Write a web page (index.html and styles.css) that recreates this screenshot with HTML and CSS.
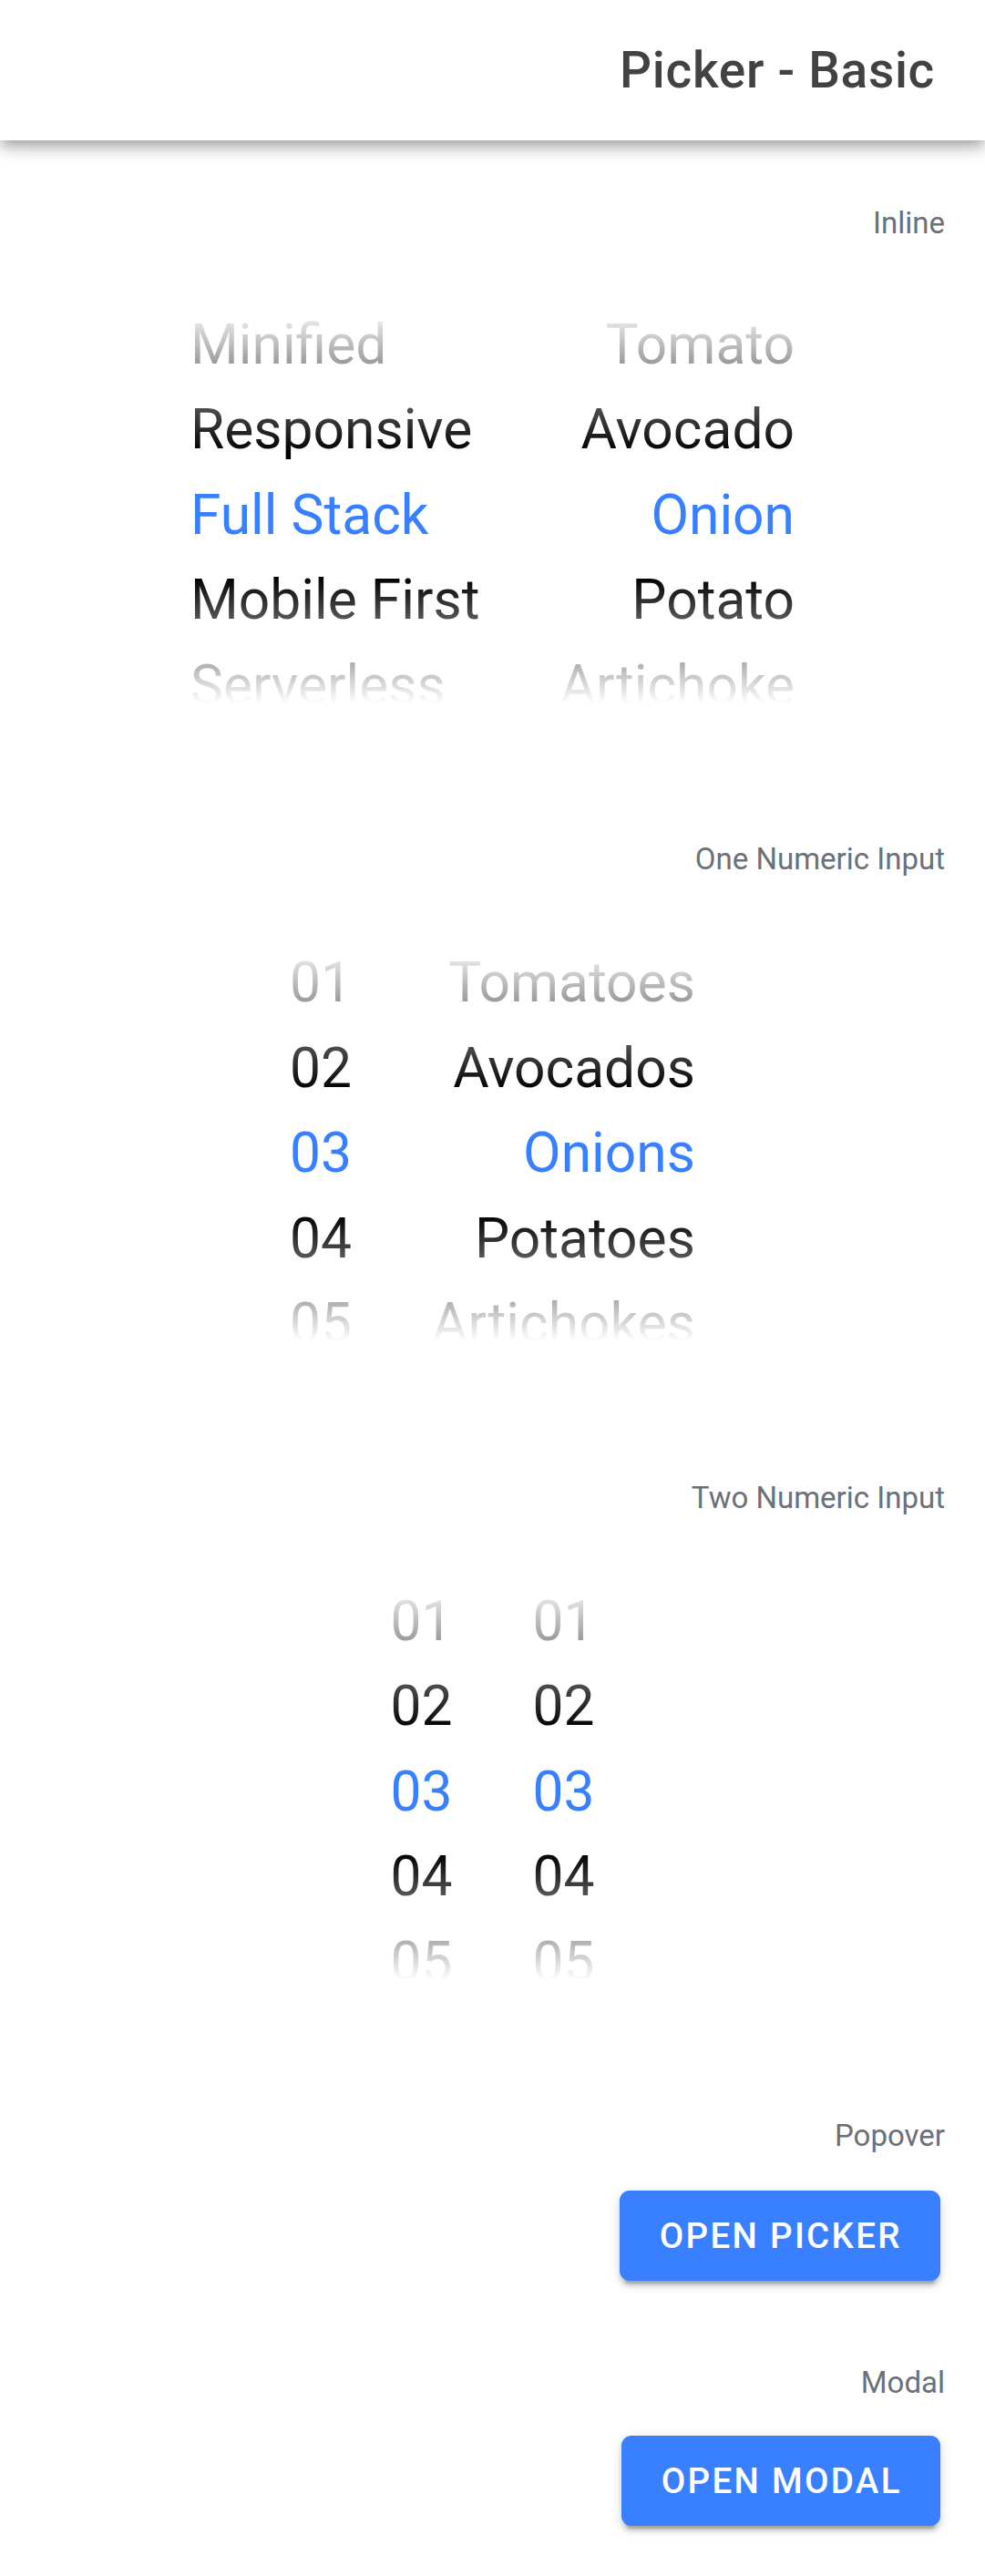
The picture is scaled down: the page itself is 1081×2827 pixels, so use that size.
FILE: index.html
```html
<!DOCTYPE html>
<html lang="en">
<head>
<meta charset="utf-8">
<title>Picker - Basic</title>
<link rel="stylesheet" href="styles.css">
</head>
<body>
<header class="toolbar">
  <h1 class="toolbar-title">Picker - Basic</h1>
</header>
<main class="content">
  <section class="section">
    <h2 class="section-label">Inline</h2>
    <div class="picker">
      <div class="picker-cols">
        <div class="picker-col col-start">
          <div class="picker-item">Minified</div>
          <div class="picker-item">Responsive</div>
          <div class="picker-item is-active">Full Stack</div>
          <div class="picker-item">Mobile First</div>
          <div class="picker-item">Serverless</div>
        </div>
        <div class="picker-col col-end">
          <div class="picker-item">Tomato</div>
          <div class="picker-item">Avocado</div>
          <div class="picker-item is-active">Onion</div>
          <div class="picker-item">Potato</div>
          <div class="picker-item">Artichoke</div>
        </div>
      </div>
      <div class="fade fade-top"></div>
      <div class="fade fade-bottom"></div>
    </div>
  </section>

  <section class="section section-numeric">
    <h2 class="section-label">One Numeric Input</h2>
    <div class="picker">
      <div class="picker-cols">
        <div class="picker-col col-start">
          <div class="picker-item">01</div>
          <div class="picker-item">02</div>
          <div class="picker-item is-active">03</div>
          <div class="picker-item">04</div>
          <div class="picker-item">05</div>
        </div>
        <div class="picker-col col-end">
          <div class="picker-item">Tomatoes</div>
          <div class="picker-item">Avocados</div>
          <div class="picker-item is-active">Onions</div>
          <div class="picker-item">Potatoes</div>
          <div class="picker-item">Artichokes</div>
        </div>
      </div>
      <div class="fade fade-top"></div>
      <div class="fade fade-bottom"></div>
    </div>
  </section>

  <section class="section section-numeric">
    <h2 class="section-label">Two Numeric Input</h2>
    <div class="picker">
      <div class="picker-cols">
        <div class="picker-col col-start">
          <div class="picker-item">01</div>
          <div class="picker-item">02</div>
          <div class="picker-item is-active">03</div>
          <div class="picker-item">04</div>
          <div class="picker-item">05</div>
        </div>
        <div class="picker-col col-start">
          <div class="picker-item">01</div>
          <div class="picker-item">02</div>
          <div class="picker-item is-active">03</div>
          <div class="picker-item">04</div>
          <div class="picker-item">05</div>
        </div>
      </div>
      <div class="fade fade-top"></div>
      <div class="fade fade-bottom"></div>
    </div>
  </section>

  <section class="section section-button">
    <h2 class="section-label">Popover</h2>
    <div class="button-row">
      <button class="btn" type="button">Open Picker</button>
    </div>
  </section>

  <section class="section section-button">
    <h2 class="section-label">Modal</h2>
    <div class="button-row">
      <button class="btn" type="button">Open Modal</button>
    </div>
  </section>
</main>
</body>
</html>
```
FILE: styles.css
```css
* {
  box-sizing: border-box;
}

html, body {
  margin: 0;
  padding: 0;
  background: #ffffff;
}

body {
  font-family: Roboto, "Noto Sans", "Liberation Sans", sans-serif;
  min-height: 2827px;
}

.toolbar {
  position: relative;
  z-index: 2;
  height: 154px;
  display: flex;
  align-items: center;
  justify-content: flex-end;
  padding: 0 55px;
  background: #ffffff;
  box-shadow: 0 5.5px 11px -2.75px rgba(0, 0, 0, 0.2),
              0 11px 14px 0 rgba(0, 0, 0, 0.14),
              0 2.75px 27px 0 rgba(0, 0, 0, 0.12);
}

.toolbar-title {
  margin: 0;
  font-size: 55px;
  font-weight: 500;
  letter-spacing: 0.69px;
  color: #424242;
  line-height: 64px;
}

.content {
  padding: 70.7px 0 40px;
}

.section {
  display: flex;
  flex-direction: column;
}

.section + .section {
  margin-top: 82.5px;
}

.section-label {
  margin: 0 44px 26px 0;
  font-size: 33px;
  font-weight: 400;
  line-height: 40px;
  color: #6c7077;
  text-align: right;
}

.section-numeric .section-label {
  margin-bottom: 28px;
}

.picker {
  position: relative;
  height: 550px;
  overflow: hidden;
}

.picker-cols {
  display: flex;
  justify-content: center;
  gap: 88px;
  padding-top: 41.25px;
}

.picker-col {
  display: flex;
  flex-direction: column;
}

.col-start {
  text-align: left;
}

.col-end {
  text-align: right;
}

.picker-item {
  height: 93.5px;
  font-size: 60.5px;
  line-height: 93.5px;
  color: #000000;
  white-space: nowrap;
}

.picker-item.is-active {
  color: #3880ff;
}

.fade {
  position: absolute;
  left: 0;
  right: 0;
  pointer-events: none;
}

.fade-top {
  top: 0;
  height: 228.25px;
  background: linear-gradient(to bottom, #ffffff 20%, rgba(255, 255, 255, 0) 90%);
}

.fade-bottom {
  top: 319px;
  height: 231px;
  background: linear-gradient(to top, #ffffff 30%, rgba(255, 255, 255, 0) 90%);
}

.section-button .section-label {
  margin-bottom: 0;
}

.section.section-button + .section.section-button {
  margin-top: 0;
}

.button-row {
  display: flex;
  justify-content: flex-end;
  padding: 40px 49.5px 92px 0;
}

.section-button:last-child .button-row {
  padding-top: 38.3px;
  padding-bottom: 0;
}

.btn {
  height: 99px;
  padding: 0 41.7px 0 44px;
  border: none;
  border-radius: 11px;
  background: #3880ff;
  color: #ffffff;
  font-family: Roboto, "Noto Sans", "Liberation Sans", sans-serif;
  font-size: 38.5px;
  font-weight: 500;
  letter-spacing: 2.31px;
  text-transform: uppercase;
  box-shadow: 0 8.25px 2.75px -5.5px rgba(0, 0, 0, 0.2),
              0 5.5px 5.5px 0 rgba(0, 0, 0, 0.14),
              0 2.75px 13.75px 0 rgba(0, 0, 0, 0.12);
}
```
